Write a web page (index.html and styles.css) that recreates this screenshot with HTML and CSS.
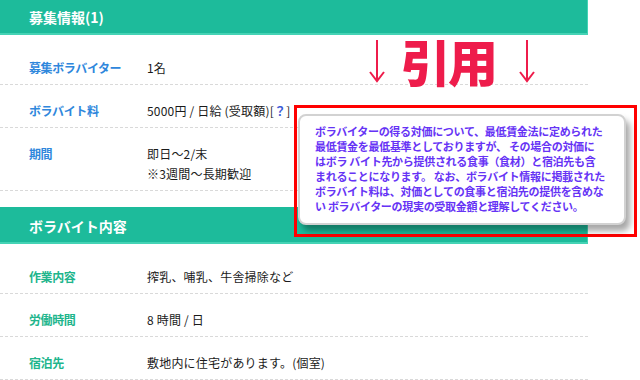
FILE: index.html
```html
<!DOCTYPE html>
<html lang="ja">
<head>
<meta charset="utf-8">
<link rel="stylesheet" href="styles.css">
</head>
<body>
<div class="page">
  <section class="sec first">
    <h2 class="sec-head">募集情報(1)</h2>
    <div class="rows blue">
      <div class="row"><div class="lbl">募集ボラバイター</div><div class="val">1名</div></div>
      <div class="row"><div class="lbl">ボラバイト料</div><div class="val">5000円 / 日給 (受取額)[<span class="q">？</span>]</div></div>
      <div class="row"><div class="lbl">期間</div><div class="val">即日〜2/末<br>※3週間〜長期歓迎</div></div>
    </div>
  </section>
  <section class="sec">
    <h2 class="sec-head">ボラバイト内容</h2>
    <div class="rows green">
      <div class="row"><div class="lbl">作業内容</div><div class="val">搾乳、哺乳、牛舎掃除など</div></div>
      <div class="row"><div class="lbl">労働時間</div><div class="val">8 時間 / 日</div></div>
      <div class="row"><div class="lbl">宿泊先</div><div class="val">敷地内に住宅があります。(個室)</div></div>
    </div>
  </section>
</div>

<div class="annot">
  <svg class="arrow" width="18" height="44" viewBox="0 0 18 44"><path d="M9 1 V42 M2 33 L9 42 L16 33" fill="none" stroke="#ee1c4b" stroke-width="2"/></svg>
  <span class="cite">引用</span>
  <svg class="arrow" width="18" height="44" viewBox="0 0 18 44"><path d="M9 1 V42 M2 33 L9 42 L16 33" fill="none" stroke="#ee1c4b" stroke-width="2"/></svg>
</div>

<div class="frame">
  <div class="popup">
    <span class="ln">ボラバイターの得る対価について、最低賃金法に定められた</span>
    <span class="ln">最低賃金を最低基準としておりますが、 その場合の対価に</span>
    <span class="ln">はボラ バイト先から提供される食事（食材）と宿泊先も含</span>
    <span class="ln">まれることになります。 なお、ボラバイト情報に掲載された</span>
    <span class="ln">ボラバイト料は、対価としての食事と宿泊先の提供を含めな</span>
    <span class="ln">い ボラバイターの現実の受取金額と理解してください。</span>
  </div>
</div>
</body>
</html>
```

FILE: styles.css
```css
* { box-sizing: border-box; }
html, body { margin: 0; padding: 0; background: #fff; }
body {
  width: 640px;
  height: 380px;
  overflow: hidden;
  position: relative;
  font-family: "Noto Sans CJK JP", "Noto Sans", sans-serif;
  color: #222;
}
.page { width: 588px; margin-top: -2px; }
.sec { margin-top: 16px; }
.sec.first { margin-top: 0; }
.sec-head {
  margin: 0;
  height: 37px;
  padding: 3px 0 0 29px;
  line-height: 32px;
  background: #1dbb9b;
  border-bottom: 2px solid #45d3b5;
  border-right: 1px solid #45d3b5;
  color: #fff;
  font-size: 14px;
  font-weight: 700;
}
.rows { padding-top: 7px; }
.row {
  display: flex;
  padding: 16px 0 6px 29px;
  border-bottom: 1px dashed #d9d9d9;
  font-size: 12px;
  line-height: 20px;
}
.lbl { width: 118px; flex: none; font-weight: 700; letter-spacing: -0.4px; }
.blue .lbl { color: #2f87dc; }
.green .lbl { color: #21b58c; }
.val { color: #1a1a1a; letter-spacing: 0.2px; }
.q { color: #3b5bd6; font-weight: 700; }

.annot {
  position: absolute;
  left: 368px;
  top: 32px;
  display: flex;
  align-items: flex-start;
}
.arrow { margin-top: 7px; }
.cite {
  font-size: 50px;
  line-height: 56px;
  font-weight: 900;
  color: #ee1c4b;
  letter-spacing: -3px;
  margin: 0 23px 0 15px;
}

.frame {
  position: absolute;
  left: 294px;
  top: 105px;
  width: 343px;
  height: 132px;
  border: 3px solid #ff0000;
  padding: 6px 0 0 1px;
}
.popup {
  width: 328px;
  height: 111px;
  background: #fff;
  border: 2px solid #d2d2d2;
  border-radius: 8px;
  box-shadow: 4px 6px 6px rgba(0, 0, 0, 0.35);
  padding: 8px 0 0 15px;
  display: flex;
  flex-direction: column;
}
.ln {
  white-space: pre;
  font-size: 11px;
  line-height: 15px;
  font-weight: 700;
  color: #6633f5;
  letter-spacing: -0.3px;
}
```
